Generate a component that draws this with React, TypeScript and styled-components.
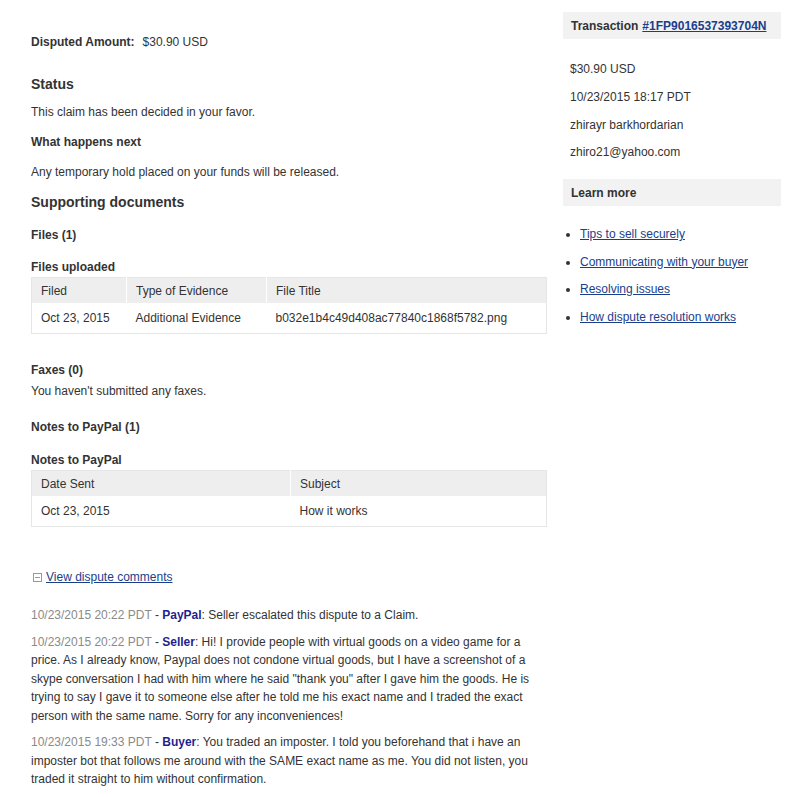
import styled, { createGlobalStyle } from "styled-components";

const GlobalStyle = createGlobalStyle`
  body {
    margin: 0;
    background: #fff;
    font-family: "Liberation Sans", Arial, sans-serif;
    font-size: 12px;
    color: #333;
  }
`;

const Page = styled.div`
  display: grid;
  grid-template-columns: 516px 218px;
  column-gap: 16px;
  padding: 12px 10px 0 31px;
`;

const Main = styled.div`
  display: flex;
  flex-direction: column;
`;

const AmountRow = styled.div`
  display: flex;
  gap: 8px;
  margin-top: 22px;
  line-height: 16px;
`;

const Label = styled.span`
  font-weight: bold;
`;

const Heading = styled.h2<{ $top: number }>`
  font-size: 14px;
  font-weight: bold;
  margin: ${(p) => p.$top}px 0 0;
  line-height: 18px;
`;

const SubHeading = styled.h3<{ $top: number }>`
  font-size: 12px;
  font-weight: bold;
  margin: ${(p) => p.$top}px 0 0;
  line-height: 16px;
`;

const Text = styled.p<{ $top: number }>`
  margin: ${(p) => p.$top}px 0 0;
  line-height: 16px;
`;

const Table = styled.table<{ $top: number }>`
  margin-top: ${(p) => p.$top}px;
  width: 516px;
  border-collapse: collapse;
  table-layout: fixed;
  border: 1px solid #e6e6e6;
`;

/* $w is the full column width; padding is taken off it */
const Th = styled.th<{ $w?: number }>`
  width: ${(p) => (p.$w ? `${p.$w - 18}px` : "auto")};
  background: #eee;
  font-weight: normal;
  text-align: left;
  padding: 0 9px;
  height: 25px;
  font-size: 12px;
  border-left: 1px solid #fff;
  &:first-child {
    border-left: none;
  }
`;

const Td = styled.td`
  padding: 0 9px;
  height: 30px;
  font-size: 12px;
  background: #fff;
`;

const Toggle = styled.div`
  margin-top: 42px;
  display: flex;
  align-items: center;
  gap: 4px;
  padding-left: 2px;
  line-height: 16px;
`;

const MinusBox = styled.span`
  width: 7px;
  height: 7px;
  border: 1px solid #999;
  position: relative;
  display: inline-block;
  &::after {
    content: "";
    position: absolute;
    left: 1px;
    right: 1px;
    top: 3px;
    height: 1px;
    background: #999;
  }
`;

const Link = styled.a<{ $bold?: boolean }>`
  color: #1a3e8c;
  text-decoration: underline;
  font-weight: ${(p) => (p.$bold ? "bold" : "normal")};
  cursor: pointer;
`;

const Comments = styled.div`
  margin-top: 21px;
  display: flex;
  flex-direction: column;
  gap: 8px;
`;

const Comment = styled.p`
  margin: 0;
  line-height: 18.5px;
  font-size: 12px;
`;

const Stamp = styled.span`
  color: #8a8a8a;
`;

const Who = styled.span`
  color: #1f1f8f;
  font-weight: bold;
`;

const Side = styled.aside`
  display: flex;
  flex-direction: column;
`;

const SideHead = styled.div<{ $top: number }>`
  margin-top: ${(p) => p.$top}px;
  background: #f2f2f2;
  font-weight: bold;
  padding: 0 8px;
  height: 27px;
  display: flex;
  align-items: center;
  gap: 4px;
`;

const SideLine = styled.div<{ $top: number }>`
  margin-top: ${(p) => p.$top}px;
  padding-left: 7px;
  line-height: 16px;
`;

const Links = styled.ul`
  margin: 20px 0 0;
  padding-left: 17px;
  display: flex;
  flex-direction: column;
  gap: 11.5px;
  li {
    line-height: 16px;
    color: #333;
  }
`;

const comments = [
  {
    at: "10/23/2015 20:22 PDT",
    who: "PayPal",
    text: "Seller escalated this dispute to a Claim.",
  },
  {
    at: "10/23/2015 20:22 PDT",
    who: "Seller",
    text: 'Hi! I provide people with virtual goods on a video game for a price. As I already know, Paypal does not condone virtual goods, but I have a screenshot of a skype conversation I had with him where he said "thank you" after I gave him the goods. He is trying to say I gave it to someone else after he told me his exact name and I traded the exact person with the same name. Sorry for any inconveniences!',
  },
  {
    at: "10/23/2015 19:33 PDT",
    who: "Buyer",
    text: "You traded an imposter. I told you beforehand that i have an imposter bot that follows me around with the SAME exact name as me. You did not listen, you traded it straight to him without confirmation.",
  },
];

const learn = [
  "Tips to sell securely",
  "Communicating with your buyer",
  "Resolving issues",
  "How dispute resolution works",
];

export default function App() {
  return (
    <>
      <GlobalStyle />
      <Page>
        <Main>
          <AmountRow>
            <Label>Disputed Amount:</Label>
            <span>$30.90 USD</span>
          </AmountRow>

          <Heading $top={25}>Status</Heading>
          <Text $top={11}>This claim has been decided in your favor.</Text>
          <SubHeading $top={14}>What happens next</SubHeading>
          <Text $top={14}>Any temporary hold placed on your funds will be released.</Text>

          <Heading $top={13}>Supporting documents</Heading>
          <SubHeading $top={16}>Files (1)</SubHeading>
          <SubHeading $top={16}>Files uploaded</SubHeading>
          <Table $top={2}>
            <thead>
              <tr>
                <Th $w={94}>Filed</Th>
                <Th $w={139}>Type of Evidence</Th>
                <Th>File Title</Th>
              </tr>
            </thead>
            <tbody>
              <tr>
                <Td>Oct 23, 2015</Td>
                <Td>Additional Evidence</Td>
                <Td>b032e1b4c49d408ac77840c1868f5782.png</Td>
              </tr>
            </tbody>
          </Table>

          <SubHeading $top={28}>Faxes (0)</SubHeading>
          <Text $top={5}>You haven't submitted any faxes.</Text>
          <SubHeading $top={20}>Notes to PayPal (1)</SubHeading>
          <SubHeading $top={17}>Notes to PayPal</SubHeading>
          <Table $top={2}>
            <thead>
              <tr>
                <Th $w={258}>Date Sent</Th>
                <Th>Subject</Th>
              </tr>
            </thead>
            <tbody>
              <tr>
                <Td>Oct 23, 2015</Td>
                <Td>How it works</Td>
              </tr>
            </tbody>
          </Table>

          <Toggle>
            <MinusBox />
            <Link>View dispute comments</Link>
          </Toggle>

          <Comments>
            {comments.map((c, i) => (
              <Comment key={i}>
                <Stamp>{c.at}</Stamp> - <Who>{c.who}</Who>: {c.text}
              </Comment>
            ))}
          </Comments>
        </Main>

        <Side>
          <SideHead $top={0}>
            Transaction <Link $bold>#1FP9016537393704N</Link>
          </SideHead>
          <SideLine $top={22}>$30.90 USD</SideLine>
          <SideLine $top={12}>10/23/2015 18:17 PDT</SideLine>
          <SideLine $top={12}>zhirayr barkhordarian</SideLine>
          <SideLine $top={11}>zhiro21@yahoo.com</SideLine>
          <SideHead $top={19}>Learn more</SideHead>
          <Links>
            {learn.map((l) => (
              <li key={l}>
                <Link>{l}</Link>
              </li>
            ))}
          </Links>
        </Side>
      </Page>
    </>
  );
}
